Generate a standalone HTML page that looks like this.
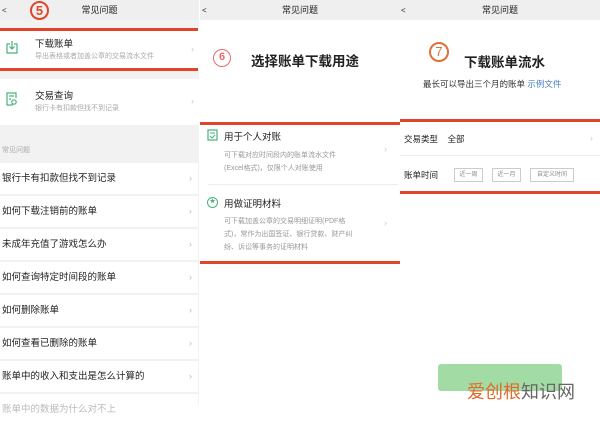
<!DOCTYPE html>
<html><head><meta charset="utf-8"><style>
*{margin:0;padding:0;box-sizing:border-box}
body{width:600px;height:405px;overflow:hidden;position:relative;background:#fff;font-family:"Liberation Sans","Noto Sans CJK SC",sans-serif;color:#222}
.a{position:absolute;white-space:nowrap}
.hd{position:absolute;top:0;height:20px;background:#efefef;font-size:9px;text-align:center;line-height:20px;color:#222}
.red{position:absolute;height:3px;background:#e0452a}
.row{position:absolute;left:0;width:198px;height:31px;background:#fff;font-size:9.5px;line-height:31px;padding-left:2px;color:#222}
.chev{position:absolute;right:6px;color:#bbb;font-size:9px}
.gray{color:#aaa;font-size:7px}
.btn{position:absolute;top:168px;height:14px;border:1px solid #ccc;font-size:6px;color:#888;line-height:12px;text-align:center}
</style></head><body>
<!-- left panel -->
<div class="a" style="left:0;top:0;width:199px;height:405px;background:#f2f2f2"></div>
<div class="hd" style="left:0;width:199px">常见问题</div>
<div class="a" style="left:2px;top:6px;font-size:8px;color:#333">&lt;</div>
<div class="a" style="left:30px;top:1px;width:19px;height:19px;border:2px solid #e0452a;border-radius:50%;color:#e0452a;font-weight:bold;font-size:13px;line-height:15px;text-align:center">5</div>
<div class="a" style="left:0;top:29px;width:199px;height:40px;background:#fff"></div>
<div class="red" style="left:0;top:28px;width:198px"></div>
<div class="red" style="left:0;top:68px;width:198px"></div>
<svg class="a" style="left:6px;top:40px" width="12" height="14" viewBox="0 0 12 14"><path d="M4 4H1v9h10V4H8M6 1v8M3.5 6.5L6 9l2.5-2.5" fill="none" stroke="#4ab27a" stroke-width="1.2"/></svg>
<div class="a" style="left:35px;top:36px;font-size:9.5px">下载账单</div>
<div class="a gray" style="left:35px;top:51px">导出表格或者加盖公章的交易流水文件</div>
<div class="chev a" style="left:191px;top:44px;color:#ccc">›</div>
<div class="a" style="left:0;top:79px;width:199px;height:46px;background:#fff"></div>
<svg class="a" style="left:6px;top:92px" width="12" height="14" viewBox="0 0 12 14"><path d="M10 6V1H1v12h6M3 4h5M3 7h2" fill="none" stroke="#4ab27a" stroke-width="1.2"/><circle cx="8" cy="10" r="2.2" fill="none" stroke="#4ab27a" stroke-width="1.2"/></svg>
<div class="a" style="left:35px;top:88px;font-size:9.5px">交易查询</div>
<div class="a gray" style="left:35px;top:103px">银行卡有扣款但找不到记录</div>
<div class="a" style="left:191px;top:96px;color:#ccc;font-size:9px">›</div>
<div class="a gray" style="left:2px;top:145px">常见问题</div>
<div class="row" style="top:163px">银行卡有扣款但找不到记录<span class="chev">›</span></div>
<div class="row" style="top:196px">如何下载注销前的账单<span class="chev">›</span></div>
<div class="row" style="top:229px">未成年充值了游戏怎么办<span class="chev">›</span></div>
<div class="row" style="top:262px">如何查询特定时间段的账单<span class="chev">›</span></div>
<div class="row" style="top:295px">如何删除账单<span class="chev">›</span></div>
<div class="row" style="top:328px">如何查看已删除的账单<span class="chev">›</span></div>
<div class="row" style="top:361px">账单中的收入和支出是怎么计算的<span class="chev">›</span></div>
<div class="row" style="top:394px;color:#bbb">账单中的数据为什么对不上</div>
<!-- middle panel -->
<div class="hd" style="left:200px;width:200px">常见问题</div>
<div class="a" style="left:202px;top:6px;font-size:8px">&lt;</div>
<div class="a" style="left:213px;top:49px;width:18px;height:18px;border:1.5px solid #e86a6a;border-radius:50%;color:#e86a6a;font-weight:bold;font-size:11px;line-height:15px;text-align:center">6</div>
<div class="a" style="left:251px;top:50px;font-size:13.5px;font-weight:bold">选择账单下载用途</div>
<div class="red" style="left:200px;top:122px;width:200px"></div>
<svg class="a" style="left:207px;top:129px" width="11" height="12" viewBox="0 0 11 12"><rect x="1" y="1" width="9" height="10" fill="none" stroke="#4ab27a" stroke-width="1.2"/><path d="M3 4h5M3 7l2 2 3-3" fill="none" stroke="#4ab27a" stroke-width="1"/></svg>
<div class="a" style="left:224px;top:129px;font-size:9.5px">用于个人对账</div>
<div class="a gray" style="left:224px;top:149px;line-height:13px;color:#999">可下载对应时间段内的账单流水文件<br>(Excel格式)，仅限个人对账使用</div>
<div class="a" style="left:384px;top:144px;color:#ccc;font-size:9px">›</div>
<div class="a" style="left:208px;top:184px;width:190px;height:1px;background:#eee"></div>
<div class="a" style="left:207px;top:197px;width:11px;height:11px;border:1.2px solid #4ab27a;border-radius:50%;color:#4ab27a;font-size:6px;line-height:9px;text-align:center">★</div>
<div class="a" style="left:224px;top:196px;font-size:9.5px">用做证明材料</div>
<div class="a gray" style="left:224px;top:215px;line-height:13px;color:#999">可下载加盖公章的交易明细证明(PDF格<br>式)，常作为出国签证、银行贷款、财产纠<br>纷、诉讼等事务的证明材料</div>
<div class="a" style="left:384px;top:218px;color:#ccc;font-size:9px">›</div>
<div class="red" style="left:200px;top:261px;width:200px"></div>
<!-- right panel -->
<div class="hd" style="left:400px;width:200px">常见问题</div>
<div class="a" style="left:401px;top:6px;font-size:8px">&lt;</div>
<div class="a" style="left:429px;top:42px;width:20px;height:20px;border:2px solid #e0703a;border-radius:50%;color:#e0703a;font-size:13px;line-height:16px;text-align:center">7</div>
<div class="a" style="left:464px;top:51px;font-size:13.5px;font-weight:bold">下载账单流水</div>
<div class="a" style="left:423px;top:78px;font-size:8.5px;color:#333">最长可以导出三个月的账单 <span style="color:#4a7ec0">示例文件</span></div>
<div class="red" style="left:400px;top:119px;width:200px"></div>
<div class="a" style="left:404px;top:133px;font-size:8.5px">交易类型&nbsp;&nbsp;&nbsp;&nbsp;全部</div>
<div class="a" style="left:590px;top:133px;color:#ccc;font-size:9px">›</div>
<div class="a" style="left:400px;top:155px;width:200px;height:1px;background:#eee"></div>
<div class="a" style="left:404px;top:169px;font-size:8.5px">账单时间</div>
<div class="btn" style="left:454px;width:29px">近一周</div>
<div class="btn" style="left:492px;width:29px">近一月</div>
<div class="btn" style="left:530px;width:44px">自定义时间</div>
<div class="red" style="left:400px;top:191px;width:200px"></div>
<div class="a" style="left:438px;top:364px;width:124px;height:27px;background:#a3dba5;border-radius:3px"></div>
<div class="a" style="left:467px;top:378px;font-size:18px;color:#e06a2a;background:rgba(255,255,255,0)">爱创根<span style="color:#666">知识网</span></div>
</body></html>
